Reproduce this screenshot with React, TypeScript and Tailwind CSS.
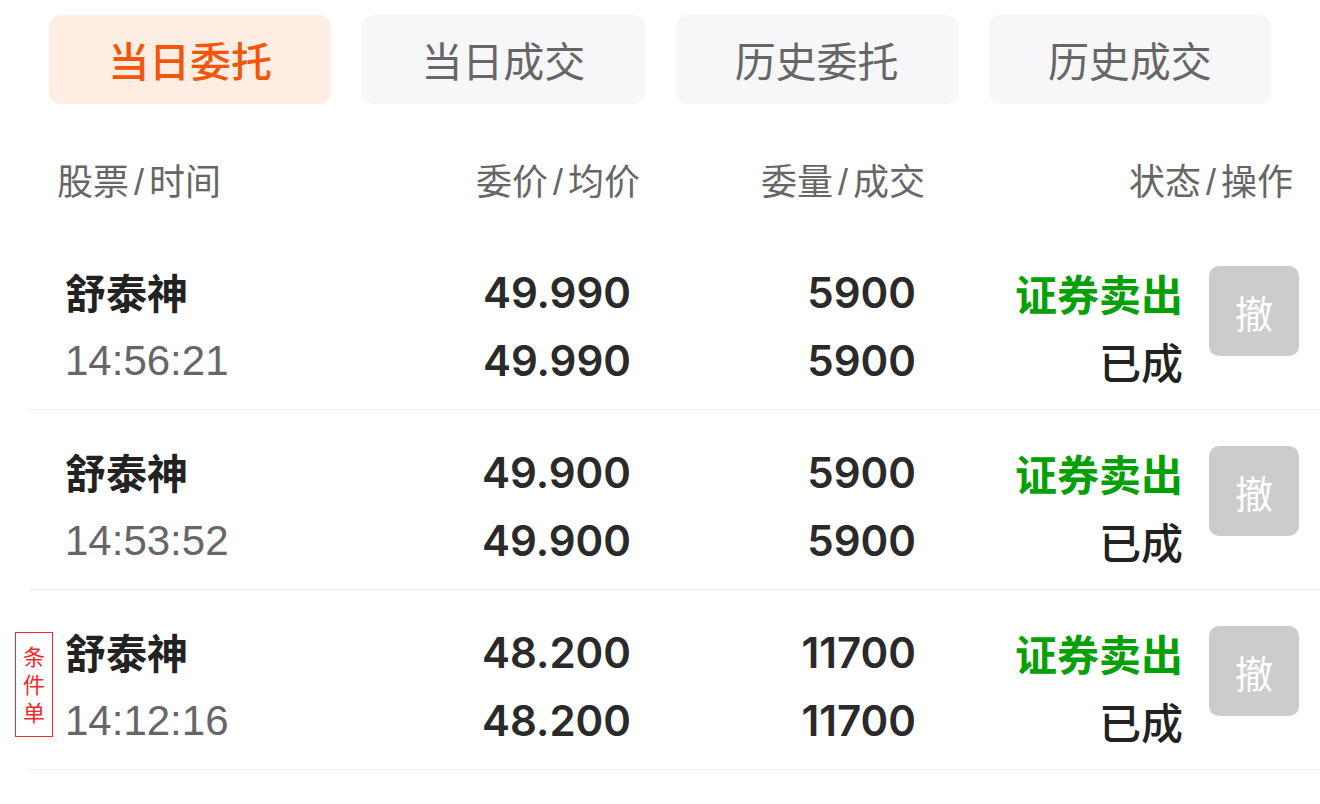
import React, { useState } from 'react';

interface Order {
  name: string;
  time: string;
  price: string;
  avg: string;
  qty: string;
  deal: string;
  side: string;
  status: string;
  conditional?: boolean;
}

const orders: Order[] = [
  { name: '舒泰神', time: '14:56:21', price: '49.990', avg: '49.990', qty: '5900', deal: '5900', side: '证券卖出', status: '已成' },
  { name: '舒泰神', time: '14:53:52', price: '49.900', avg: '49.900', qty: '5900', deal: '5900', side: '证券卖出', status: '已成' },
  { name: '舒泰神', time: '14:12:16', price: '48.200', avg: '48.200', qty: '11700', deal: '11700', side: '证券卖出', status: '已成', conditional: true },
];

const tabs = ['当日委托', '当日成交', '历史委托', '历史成交'];

const cjk = "font-['Noto_Sans_CJK_SC',sans-serif]";
const time = "font-['Liberation_Sans','Noto_Sans_CJK_SC',sans-serif]";
const num = "font-['Inter','Liberation_Sans',sans-serif]";

const HeadCell = ({ a, b, className }: { a: string; b: string; className: string }) => (
  <div className={className}>
    {a}
    <span className="mx-[5px] font-['Liberation_Sans',sans-serif]">/</span>
    {b}
  </div>
);

export default function App() {
  const [active, setActive] = useState(0);

  return (
    <div className={`w-[1320px] h-[804px] bg-white overflow-hidden ${cjk}`}>
      {/* tabs */}
      <div className="flex gap-[31px] px-[49px] pt-[15px]">
        {tabs.map((t, i) => (
          <button
            key={t}
            onClick={() => setActive(i)}
            className={`flex-1 h-[89px] rounded-[12px] text-[41px] leading-none ${
              i === active ? 'bg-[#fdede3] text-[#f1560b] font-medium' : 'bg-[#f7f7f9] text-[#666666]'
            }`}
          >
            {t}
          </button>
        ))}
      </div>

      {/* header */}
      <div className="flex items-center h-[96px] mt-[30px] pb-[2px] pl-[57px] pr-[27px] text-[36px] text-[#666666] leading-none">
        <HeadCell a="股票" b="时间" className="w-[343px]" />
        <HeadCell a="委价" b="均价" className="w-[240px] text-right" />
        <HeadCell a="委量" b="成交" className="w-[285px] text-right" />
        <HeadCell a="状态" b="操作" className="w-[368px] text-right" />
      </div>

      {/* rows */}
      {orders.map((o, idx) => (
        <div key={idx} className="relative ml-[30px] h-[180px] border-b border-[#ececec]">
          {o.conditional && (
            <div className="absolute left-[-15px] top-[42px] w-[38px] h-[105px] border border-[#f22a2a] flex items-center justify-center pt-[6px] text-[22px] leading-none text-[#f22a2a]">
              <span className="[writing-mode:vertical-rl] tracking-[6px]">条件单</span>
            </div>
          )}
          <div className="flex pl-[35px] pt-[28px]">
            <div className="w-[335px] flex flex-col">
              <div className="h-[68px] flex items-center text-[41px] font-bold text-[#222222]">{o.name}</div>
              <div className={`h-[68px] flex items-center text-[42px] text-[#666666] ${time}`}>{o.time}</div>
            </div>
            <div className={`w-[231px] flex flex-col items-end text-[42px] font-semibold text-[#2a2a2a] ${num}`}>
              <div className="h-[68px] flex items-center">{o.price}</div>
              <div className="h-[68px] flex items-center">{o.avg}</div>
            </div>
            <div className={`w-[285px] flex flex-col items-end text-[42px] font-semibold text-[#2a2a2a] ${num}`}>
              <div className="h-[68px] flex items-center">{o.qty}</div>
              <div className="h-[68px] flex items-center">{o.deal}</div>
            </div>
            <div className="w-[267px] flex flex-col items-end text-[42px]">
              <div className="h-[68px] flex items-center font-semibold text-[#05a005]">{o.side}</div>
              <div className="h-[68px] flex items-center font-medium text-[#222222]">{o.status}</div>
            </div>
            <div className="ml-[26px] pt-[8px]">
              <button className="w-[90px] h-[90px] rounded-[10px] bg-[#cccccc] text-white text-[38px] flex items-center justify-center">
                撤
              </button>
            </div>
          </div>
        </div>
      ))}
    </div>
  );
}
